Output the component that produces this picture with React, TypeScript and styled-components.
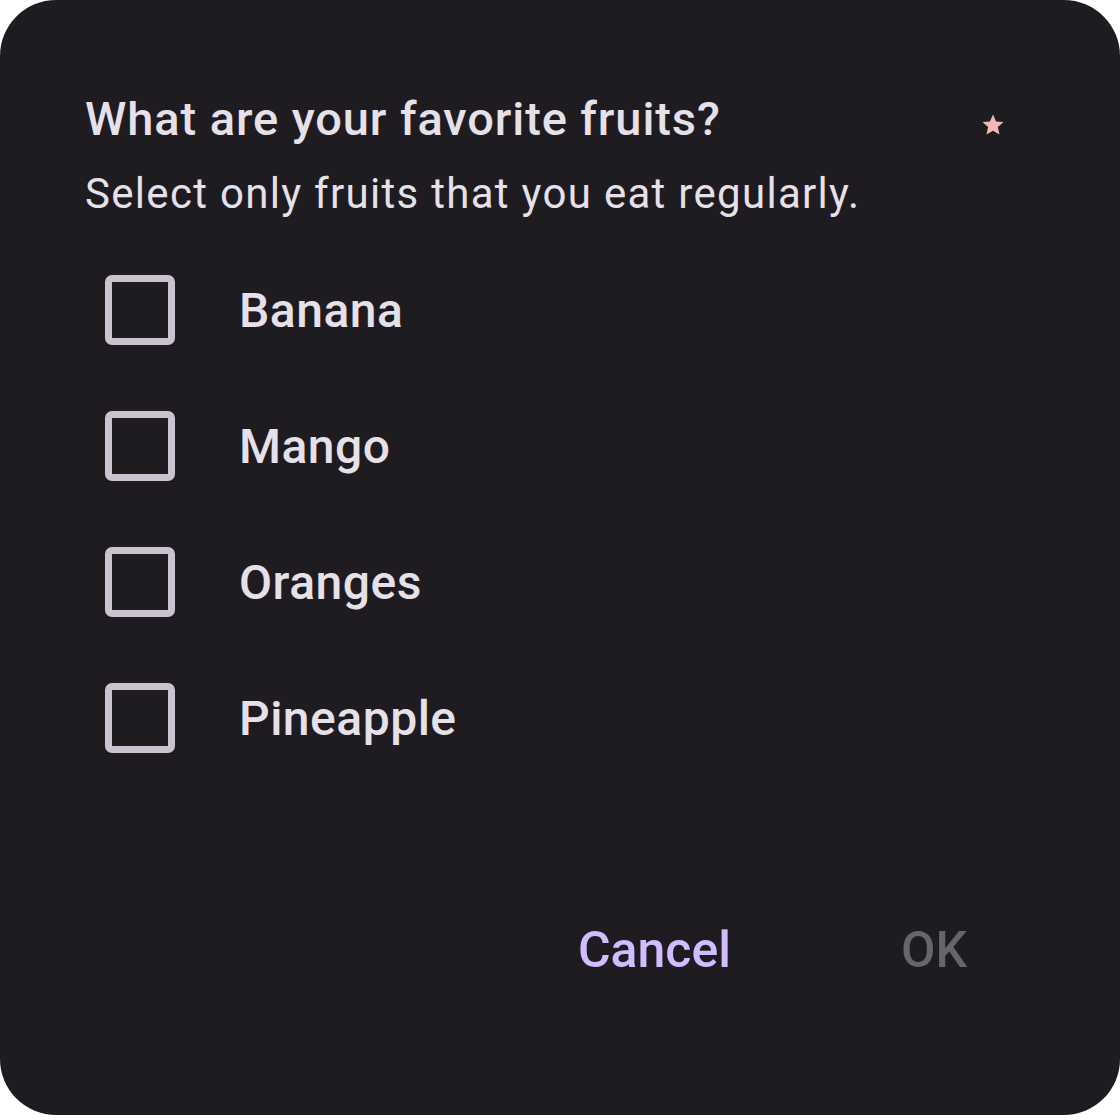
import React from 'react'
import styled, { createGlobalStyle } from 'styled-components'

const GlobalStyle = createGlobalStyle`
  html, body {
    margin: 0;
    padding: 0;
    background: #ffffff;
  }
  body {
    font-family: Roboto, "Noto Sans", sans-serif;
  }
`

const Dialog = styled.div`
  width: 1120px;
  height: 1115px;
  box-sizing: border-box;
  background: #1e1c20;
  border-radius: 56px;
  padding: 88px 85px 0 85px;
  display: flex;
  flex-direction: column;
`

const Header = styled.div`
  display: flex;
  align-items: flex-start;
  justify-content: space-between;
  padding-right: 30px;
`

const Title = styled.h2`
  margin: 0;
  font-size: 47px;
  line-height: 62px;
  font-weight: 500;
  letter-spacing: 0.9px;
  color: #e6e0e9;
`

const Star = styled.svg`
  width: 24px;
  height: 24px;
  margin-top: 25px;
  fill: #f2b8b5;
`

const Subtitle = styled.p`
  margin: 16px 0 0 0;
  font-size: 42px;
  line-height: 56px;
  letter-spacing: 1.3px;
  color: #e6e0e9;
`

const Options = styled.div`
  display: flex;
  flex-direction: column;
  margin-top: 20px;
`

const Option = styled.label`
  display: flex;
  align-items: center;
  height: 136px;
  padding-left: 20px;
  gap: 64px;
  cursor: pointer;
`

const Box = styled.span`
  width: 70px;
  height: 70px;
  box-sizing: border-box;
  border: 7px solid #cac4d0;
  border-radius: 7px;
  flex-shrink: 0;
`

const OptionLabel = styled.span`
  font-size: 48px;
  font-weight: 500;
  color: #e6e0e9;
  letter-spacing: 0.5px;
`

const Actions = styled.div`
  margin-top: auto;
  display: flex;
  justify-content: flex-end;
  align-items: center;
  gap: 170px;
  padding: 0 68px 135px 0;
`

const ActionButton = styled.button<{ $disabled?: boolean }>`
  background: none;
  border: none;
  padding: 0;
  font-family: Roboto, "Noto Sans", sans-serif;
  font-size: 50px;
  font-weight: 500;
  line-height: 60px;
  color: ${p => (p.$disabled ? '#67646a' : '#d0bcff')};
  cursor: ${p => (p.$disabled ? 'default' : 'pointer')};
`

const fruits = ['Banana', 'Mango', 'Oranges', 'Pineapple']

export default function App() {
  return (
    <>
      <GlobalStyle />
      <Dialog>
        <Header>
          <Title>What are your favorite fruits?</Title>
          <Star viewBox="0 0 24 24">
            <path d="M12 1.5l3.1 6.9 7.4.7-5.6 5 1.6 7.4L12 17.7l-6.5 3.8 1.6-7.4-5.6-5 7.4-.7z" />
          </Star>
        </Header>
        <Subtitle>Select only fruits that you eat regularly.</Subtitle>
        <Options>
          {fruits.map(f => (
            <Option key={f}>
              <Box />
              <OptionLabel>{f}</OptionLabel>
            </Option>
          ))}
        </Options>
        <Actions>
          <ActionButton>Cancel</ActionButton>
          <ActionButton $disabled>OK</ActionButton>
        </Actions>
      </Dialog>
    </>
  )
}
